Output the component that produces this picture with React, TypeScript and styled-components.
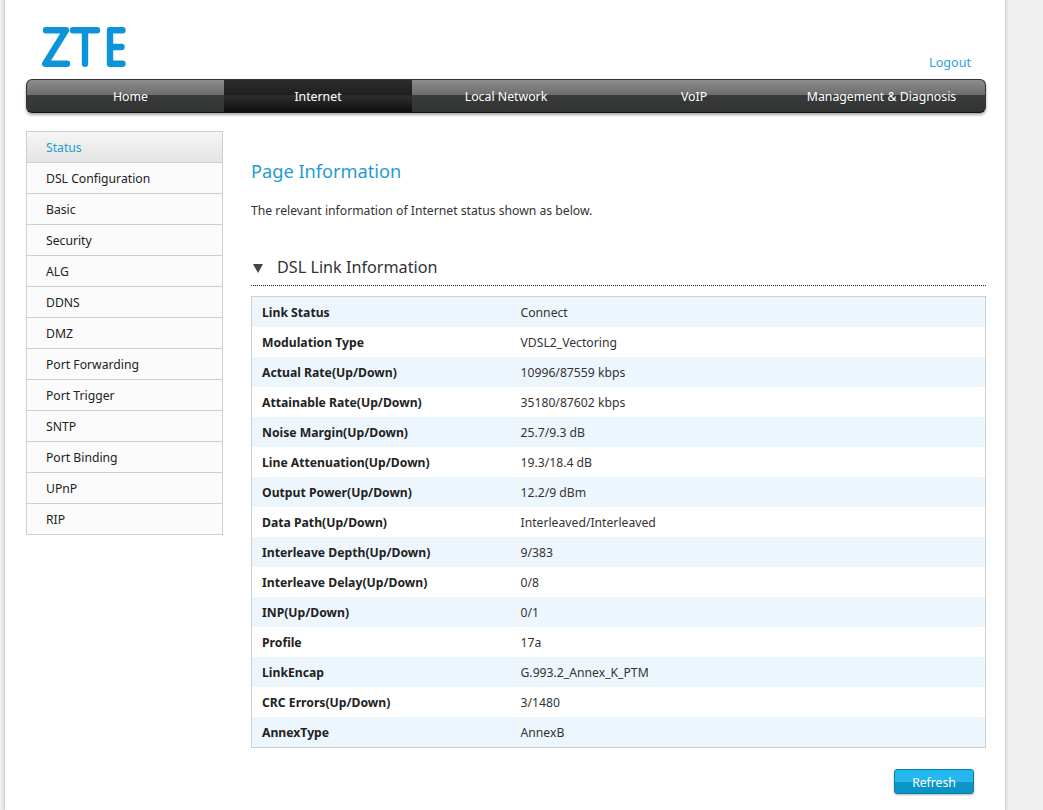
import React from 'react';
import styled, { createGlobalStyle } from 'styled-components';

const FONT = `"Noto Sans", "Open Sans", "Liberation Sans", sans-serif`;

const GlobalStyle = createGlobalStyle`
    html, body {
        margin: 0;
        padding: 0;
        height: 100%;
        overflow: hidden;
        background: #f0f0f0;
        font-family: ${FONT};
        font-size: 12.2px;
        color: #222;
    }
`;

const Page = styled.div`
    box-sizing: border-box;
    width: 1000px;
    height: 810px;
    margin-left: 5px;
    padding: 0 19px 0 21px;
    background: #fff;
    box-shadow: 0 0 3px 1px #c4c4c4;
    overflow: hidden;
`;

const Header = styled.header`
    height: 79px;
    display: flex;
    justify-content: space-between;
    align-items: flex-end;
`;

const LogoMark = styled.svg`
    display: block;
    width: 84px;
    height: 40px;
    margin: 0 0 12px 16px;
`;

const Logout = styled.a`
    color: #2ba3dc;
    font-size: 12.6px;
    line-height: 18px;
    margin: 0 15px 7px 0;
`;

const NavBar = styled.nav`
    box-sizing: border-box;
    height: 34px;
    display: flex;
    border-radius: 6px;
    border: 1px solid #333;
    border-bottom-color: #111;
    overflow: hidden;
    background: linear-gradient(#8d8d8d 0, #6d6d6d 46%, #383a3a 47%, #333535 100%);
    box-shadow: 0 2px 3px rgba(0, 0, 0, 0.35);
`;

const NavItem = styled.a<{ $active?: boolean }>`
    flex: 0 0 188px;
    display: flex;
    justify-content: center;
    align-items: center;
    color: #fff;
    font-size: 12.3px;
    background: ${p => p.$active
        ? 'linear-gradient(#2c2c2c 0, #1f1f1f 46%, #2e2e2e 50%, #0e0e0e 100%)'
        : 'transparent'};

    &:first-child {
        box-sizing: border-box;
        flex-basis: 197px;
        padding-left: 10px;
    }

    &:last-child {
        flex: 1;
        padding-right: 10px;
    }
`;

const Body = styled.div`
    display: flex;
    align-items: flex-start;
    margin-top: 18px;
`;

const Sidebar = styled.ul`
    box-sizing: border-box;
    flex: 0 0 197px;
    margin: 0;
    padding: 0;
    list-style: none;
    border: 1px solid #cfcfcf;
`;

const SideItem = styled.li<{ $active?: boolean }>`
    height: 30px;
    padding-left: 19px;
    line-height: 32px;
    font-size: 12.2px;
    color: ${p => p.$active ? '#1d9dd3' : '#222'};
    background: ${p => p.$active ? 'linear-gradient(#f6f6f6, #e4e4e4)' : '#fbfbfb'};
    border-bottom: 1px solid #cfcfcf;

    &:last-child {
        border-bottom: 0;
    }
`;

const Content = styled.main`
    flex: 1;
    min-width: 0;
    margin-left: 28px;
`;

const PageTitle = styled.h1`
    margin: 26px 0 0;
    font-size: 18.2px;
    line-height: 28px;
    font-weight: 400;
    color: #1d9dd3;
`;

const Intro = styled.p`
    margin: 17px 0 0;
    font-size: 12.2px;
    line-height: 18px;
    color: #333;
`;

const SectionHead = styled.div`
    display: flex;
    align-items: center;
    height: 36px;
    margin-top: 29px;
    border-bottom: 1px dotted #222;
    font-size: 16.2px;
    color: #333;
`;

const Caret = styled.span`
    width: 0;
    height: 0;
    margin: 3px 14px 0 2px;
    border-left: 5px solid transparent;
    border-right: 5px solid transparent;
    border-top: 9px solid #444;
`;

const InfoTable = styled.div`
    margin-top: 10px;
    border: 1px solid #cdd0d3;
`;

const InfoRow = styled.div`
    display: flex;
    height: 30px;
    align-items: center;
    padding-left: 10px;
    font-size: 12.2px;

    &:nth-child(odd) {
        background: #eef6fd;
    }
`;

const InfoLabel = styled.div`
    flex: 0 0 258.5px;
    font-weight: 700;
    color: #222;
`;

const InfoValue = styled.div`
    color: #333;
`;

const Actions = styled.div`
    display: flex;
    justify-content: flex-end;
    margin-top: 21px;
    padding-right: 12px;
`;

const RefreshButton = styled.button`
    box-sizing: border-box;
    width: 80px;
    height: 25px;
    padding: 1px 0 0;
    border: 1px solid #0c7fa8;
    border-radius: 3px;
    background: linear-gradient(#19b9f3 0, #2fb5e8 50%, #0a97c9 51%, #0a94c4 100%);
    box-shadow: 0 1px 2px rgba(0, 0, 0, 0.3);
    color: #fff;
    font-family: ${FONT};
    font-size: 12.2px;
`;

const navItems = ['Home', 'Internet', 'Local Network', 'VoIP', 'Management & Diagnosis'];

const sideItems = [
    'Status', 'DSL Configuration', 'Basic', 'Security', 'ALG', 'DDNS', 'DMZ',
    'Port Forwarding', 'Port Trigger', 'SNTP', 'Port Binding', 'UPnP', 'RIP',
];

const linkInfo: [string, string][] = [
    ['Link Status', 'Connect'],
    ['Modulation Type', 'VDSL2_Vectoring'],
    ['Actual Rate(Up/Down)', '10996/87559 kbps'],
    ['Attainable Rate(Up/Down)', '35180/87602 kbps'],
    ['Noise Margin(Up/Down)', '25.7/9.3 dB'],
    ['Line Attenuation(Up/Down)', '19.3/18.4 dB'],
    ['Output Power(Up/Down)', '12.2/9 dBm'],
    ['Data Path(Up/Down)', 'Interleaved/Interleaved'],
    ['Interleave Depth(Up/Down)', '9/383'],
    ['Interleave Delay(Up/Down)', '0/8'],
    ['INP(Up/Down)', '0/1'],
    ['Profile', '17a'],
    ['LinkEncap', 'G.993.2_Annex_K_PTM'],
    ['CRC Errors(Up/Down)', '3/1480'],
    ['AnnexType', 'AnnexB'],
];

const Logo = () => (
    <LogoMark viewBox="0 0 84 40" aria-label="ZTE">
        <g fill="none" stroke="#0d93da" strokeWidth="6.4" strokeLinecap="round" strokeLinejoin="round">
            <path d="M4 3.2H24L3.2 36.8H25" />
            <path d="M31 3.2H55M43 3.2V36.8" />
            <path d="M80.5 3.2H68V36.8H80.5M68 20H79.5" />
        </g>
    </LogoMark>
);

export default function App() {
    return (
        <>
            <GlobalStyle />
            <Page>
                <Header>
                    <Logo />
                    <Logout>Logout</Logout>
                </Header>
                <NavBar>
                    {navItems.map(item => (
                        <NavItem key={item} $active={item === 'Internet'}>{item}</NavItem>
                    ))}
                </NavBar>
                <Body>
                    <Sidebar>
                        {sideItems.map(item => (
                            <SideItem key={item} $active={item === 'Status'}>{item}</SideItem>
                        ))}
                    </Sidebar>
                    <Content>
                        <PageTitle>Page Information</PageTitle>
                        <Intro>The relevant information of Internet status shown as below.</Intro>
                        <SectionHead>
                            <Caret />
                            DSL Link Information
                        </SectionHead>
                        <InfoTable>
                            {linkInfo.map(([label, value]) => (
                                <InfoRow key={label}>
                                    <InfoLabel>{label}</InfoLabel>
                                    <InfoValue>{value}</InfoValue>
                                </InfoRow>
                            ))}
                        </InfoTable>
                        <Actions>
                            <RefreshButton>Refresh</RefreshButton>
                        </Actions>
                    </Content>
                </Body>
            </Page>
        </>
    );
}
